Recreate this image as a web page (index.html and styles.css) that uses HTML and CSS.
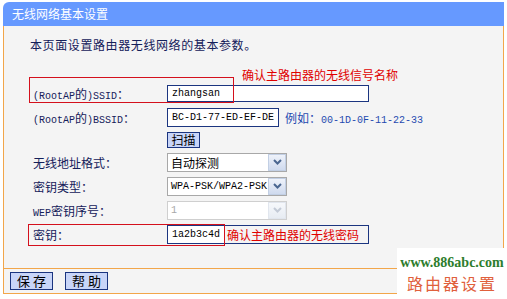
FILE: index.html
```html
<!DOCTYPE html>
<html lang="zh-CN">
<head>
  <meta charset="UTF-8" />
  <title>无线网络基本设置</title>
  <link rel="stylesheet" href="styles.css">
</head>
<body>

  <div class="panel">
    <div class="panel-head">无线网络基本设置</div>

    <div class="panel-body">
      <p class="intro">本页面设置路由器无线网络的基本参数。</p>
      <p class="note">确认主路由器的无线信号名称</p>

      <div class="row">
        <span class="mark mark-ssid"></span>
        <label class="label"><span class="mono">(RootAP</span>的<span class="mono">)SSID</span>：</label>
        <input class="field field-ssid" type="text" value="zhangsan">
      </div>

      <div class="row">
        <label class="label"><span class="mono">(RootAP</span>的<span class="mono">)BSSID</span>：</label>
        <input class="field field-bssid" type="text" value="BC-D1-77-ED-EF-DE">
        <span class="hint">例如：<span class="mono">00-1D-0F-11-22-33</span></span>
      </div>

      <div class="row row-short">
        <span class="label"></span>
        <button class="btn btn-scan">扫描</button>
      </div>

      <div class="row">
        <label class="label">无线地址格式：</label>
        <div class="select">
          <span class="select-text">自动探测</span>
          <span class="arrow"><svg width="9" height="6" viewBox="0 0 9 6"><path d="M1 1l3.5 3.5L8 1" fill="none" stroke="#4a6690" stroke-width="2"/></svg></span>
        </div>
      </div>

      <div class="row">
        <label class="label">密钥类型：</label>
        <div class="select">
          <span class="select-text mono">WPA-PSK/WPA2-PSK</span>
          <span class="arrow"><svg width="9" height="6" viewBox="0 0 9 6"><path d="M1 1l3.5 3.5L8 1" fill="none" stroke="#4a6690" stroke-width="2"/></svg></span>
        </div>
      </div>

      <div class="row">
        <label class="label"><span class="mono">WEP</span>密钥序号：</label>
        <div class="select select-off">
          <span class="select-text mono">1</span>
          <span class="arrow"><svg width="9" height="6" viewBox="0 0 9 6"><path d="M1 1l3.5 3.5L8 1" fill="none" stroke="#c3cad6" stroke-width="2"/></svg></span>
        </div>
      </div>

      <div class="row">
        <span class="mark mark-key"></span>
        <label class="label">密钥：</label>
        <input class="field field-key" type="text" value="1a2b3c4d">
        <span class="note-box">确认主路由器的无线密码</span>
      </div>
    </div>

    <div class="panel-foot">
      <button class="btn btn-foot">保 存</button>
      <button class="btn btn-foot">帮 助</button>
    </div>
  </div>

  <div class="watermark">
    <p class="wm-url">www.886abc.com</p>
    <p class="wm-name">路由器设置</p>
  </div>

</body>
</html>
```

FILE: styles.css
```css
body {
  margin: 0;
  font-family: "Noto Sans CJK SC", sans-serif;
  font-size: 12px;
  background-color: #fff;
  position: relative;
  height: 299px;
  overflow: hidden;
}

.panel {
  margin: 2px 3px 0;
}

.panel-head {
  height: 24px;
  line-height: 24px;
  background-color: #6699ff;
  color: #fff;
  padding-left: 9px;
  border-radius: 6px 0 0 0;
}

.panel-body {
  background-color: #f4f4f4;
  border-left: 1px solid #f2a64a;
  border-right: 1px solid #f2a64a;
  padding: 12px 0 22px;
}

.intro {
  margin: 0;
  padding-left: 26px;
  line-height: 14px;
  color: #14205a;
  letter-spacing: 0.6px;
}

.note {
  margin: 16px 0 0;
  padding-left: 238px;
  line-height: 13px;
  color: #e00000;
}

.row {
  display: flex;
  align-items: center;
  height: 24px;
  padding-left: 29px;
  position: relative;
}

.row-short {
  height: 21px;
}

.label {
  width: 134px;
  flex-shrink: 0;
  color: #14205a;
}

.mono {
  font-family: "Liberation Mono", monospace;
  font-size: 10px;
}

.mark {
  position: absolute;
  border: 1px solid #d4101c;
  box-sizing: border-box;
  pointer-events: none;
}

.mark-ssid {
  left: 25px;
  top: -4px;
  width: 205px;
  height: 26px;
}

.mark-key {
  left: 24px;
  top: 2px;
  width: 197px;
  height: 22px;
}

.field {
  box-sizing: border-box;
  height: 19px;
  margin: 0;
  padding: 0 0 0 4px;
  border: 1px solid #1b3580;
  background-color: #fff;
  color: #000;
  font-family: "Liberation Mono", monospace;
  font-size: 10px;
  outline: none;
}

.field-ssid {
  width: 202px;
  height: 17px;
}

.field-bssid {
  width: 112px;
}

.field-key {
  width: 58px;
}

.hint {
  margin-left: 6px;
  color: #1f4ab0;
}

.note-box {
  box-sizing: border-box;
  height: 19px;
  width: 145px;
  margin-left: -1px;
  padding-left: 2px;
  border: 1px solid #1b3580;
  line-height: 17px;
  color: #e00000;
}

.btn {
  box-sizing: border-box;
  margin: 0;
  padding: 0;
  border: 1px solid #1b3580;
  background-color: #c8d5f8;
  color: #000;
  font-family: "Noto Sans CJK SC", sans-serif;
  cursor: pointer;
}

.btn-scan {
  width: 33px;
  height: 16px;
  font-size: 12px;
  line-height: 14px;
}

.select {
  box-sizing: border-box;
  width: 120px;
  height: 19px;
  display: flex;
  border: 1px solid #a8a8a8;
  background-color: #fff;
  color: #000;
}

.select-text {
  flex-grow: 1;
  padding-left: 3px;
  line-height: 17px;
  white-space: nowrap;
  overflow: hidden;
}

.arrow {
  width: 16px;
  flex-shrink: 0;
  display: flex;
  align-items: center;
  justify-content: center;
  border: 1px solid #c2cfe4;
  background: linear-gradient(#eef2fa, #cfdaee);
}

.select-off {
  border-color: #cfcfcf;
  color: #a8a8a8;
}

.select-off .arrow {
  border-color: #e1e6ee;
  background: linear-gradient(#f6f8fb, #e7ecf3);
}

.panel-foot {
  height: 24px;
  display: flex;
  align-items: center;
  gap: 12px;
  padding-left: 6px;
  background-color: #f4f4f4;
  border: 1px solid #f2a64a;
}

.btn-foot {
  width: 43px;
  height: 18px;
  font-size: 13px;
  line-height: 16px;
}

.watermark {
  position: absolute;
  left: 397px;
  top: 248px;
  width: 110px;
  height: 51px;
  background-color: #fff;
  text-align: center;
}

.wm-url {
  margin: 6px 0 0;
  line-height: 18px;
  font-family: "Liberation Serif", serif;
  font-weight: bold;
  font-size: 14px;
  color: #2d7d2d;
}

.wm-name {
  margin: 0;
  line-height: 22px;
  font-size: 16px;
  letter-spacing: 2px;
  color: #e0603c;
}
```
